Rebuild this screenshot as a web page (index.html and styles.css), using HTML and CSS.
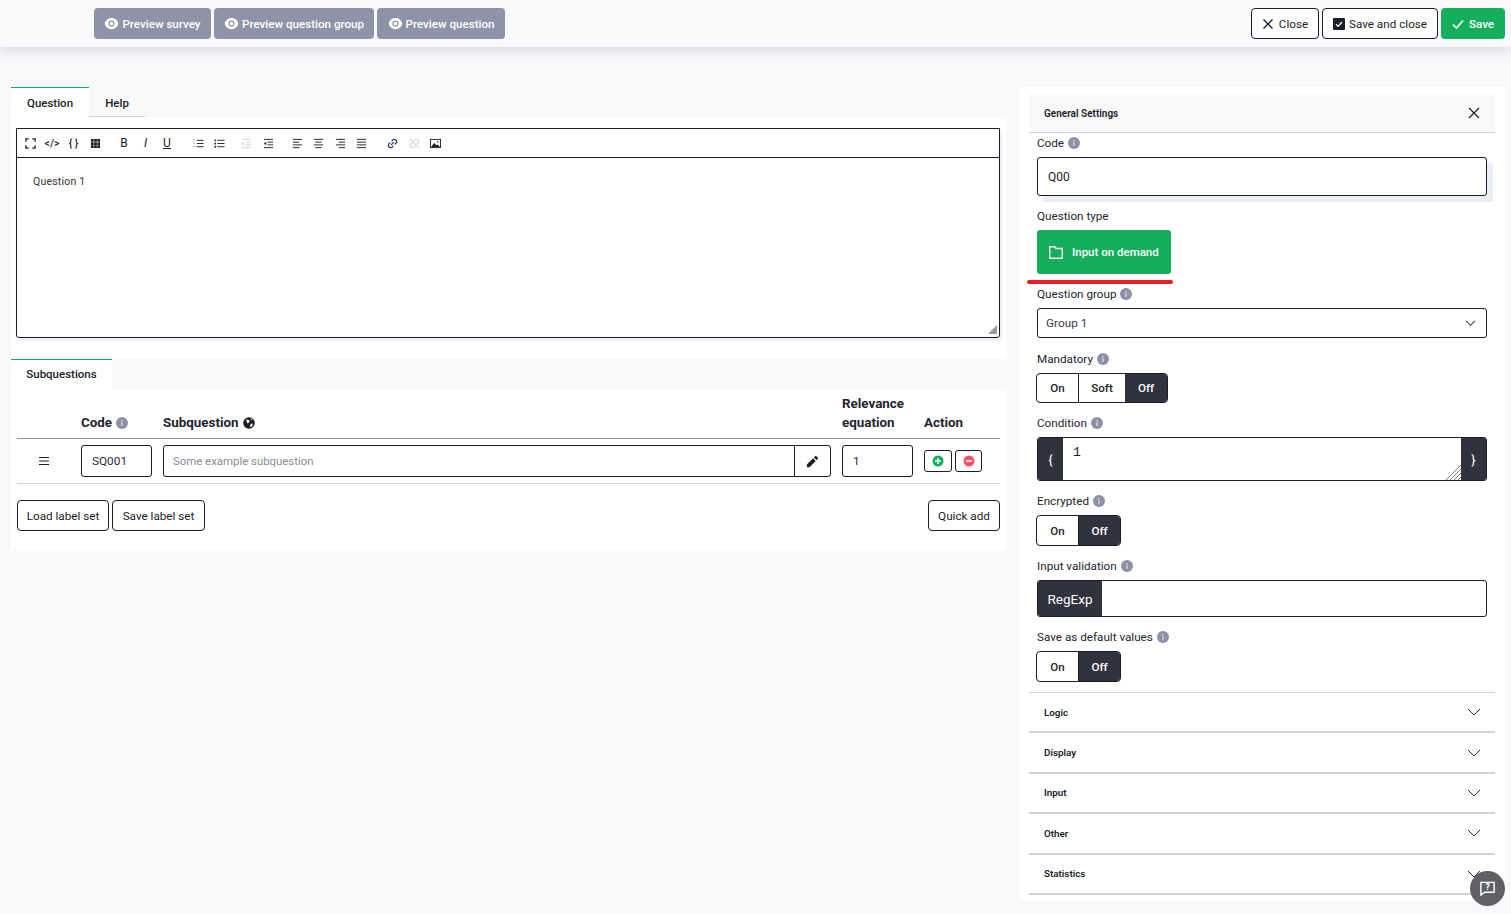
FILE: index.html
```html
<!DOCTYPE html>
<html lang="en">
<head>
  <meta charset="UTF-8" />
  <meta name="viewport" content="width=device-width, initial-scale=1" />
  <title>Question editor</title>
  <link rel="stylesheet" href="styles.css">
</head>
<body>
  <svg class="defs" aria-hidden="true">
    <symbol id="eye" viewBox="0 0 24 24"><path fill="currentColor" d="M1.181 12C2.121 6.88 6.608 3 12 3c5.392 0 9.878 3.88 10.819 9-.94 5.12-5.427 9-10.819 9-5.392 0-9.878-3.88-10.819-9zM12 17a5 5 0 1 0 0-10 5 5 0 0 0 0 10zm0-2a3 3 0 1 1 0-6 3 3 0 0 1 0 6z"/></symbol>
    <symbol id="info" viewBox="0 0 12 12"><circle cx="6" cy="6" r="6" fill="#8e92a8"/><rect x="5.300" y="5.200" width="1.400" height="3.600" fill="#d6d8e2"/><rect x="5.300" y="3" width="1.400" height="1.400" fill="#d6d8e2"/></symbol>
    <symbol id="chev" viewBox="0 0 14 8"><path fill="none" stroke="#2a2c38" d="M1 1l6 6 6-6"/></symbol>
  </svg>

  <!-- Top bar -->
  <header class="topbar">
    <div class="btn-group">
      <a class="btn btn-muted"><svg class="ico-eye"><use href="#eye"/></svg>Preview survey</a>
      <a class="btn btn-muted"><svg class="ico-eye"><use href="#eye"/></svg>Preview question group</a>
      <a class="btn btn-muted"><svg class="ico-eye"><use href="#eye"/></svg>Preview question</a>
    </div>
    <div class="btn-group">
      <a class="btn btn-outline btn-close"><svg class="ico-sm" viewBox="0 0 12 12"><path fill="none" stroke="#1b1d27" stroke-width="1.300" d="M1.500 1.500l9 9M10.500 1.500l-9 9"/></svg>Close</a>
      <a class="btn btn-outline btn-saveclose"><svg class="ico-sm" viewBox="0 0 12 12"><rect width="12" height="12" rx="1" fill="#1b1d27"/><path fill="none" stroke="#fff" stroke-width="1.300" d="M3 6.200l2.200 2.200L9 4"/></svg>Save and close</a>
      <a class="btn btn-green"><svg class="ico-sm" viewBox="0 0 12 12"><path fill="none" stroke="#fff" stroke-width="1.600" d="M1 6.500l3.500 3.500L11 2.500"/></svg>Save</a>
    </div>
  </header>

  <main class="page">
    <!-- Left column -->
    <section class="left">
      <div class="tabs">
        <div class="tab active tab-first">Question</div>
        <div class="tab tab-plain">Help</div>
      </div>
      <div class="panel editor-panel">
        <div class="editor">
          <div class="toolbar">
            <span class="tool-set">
              <svg class="tool" viewBox="0 0 12 12"><path fill="none" stroke="#1b1d27" stroke-width="1.400" d="M1 4V1h3M8 1h3v3M11 8v3H8M4 11H1V8"/></svg>
              <span class="tool tool-text">&lt;/&gt;</span>
              <span class="tool tool-text">{ }</span>
              <svg class="tool" viewBox="0 0 12 12"><path fill="#1b1d27" d="M1 1h3v3H1zM4.500 1h3v3h-3zM8 1h3v3H8zM1 4.500h3v3H1zM4.500 4.500h3v3h-3zM8 4.500h3v3H8zM1 8h3v3H1zM4.500 8h3v3h-3zM8 8h3v3H8z"/></svg>
            </span>
            <span class="tool-set">
              <span class="tool tool-letter">B</span>
              <i class="tool tool-letter">I</i>
              <u class="tool tool-letter">U</u>
            </span>
            <span class="tool-set set-lists">
              <svg class="tool" viewBox="0 0 12 12"><path stroke="#1b1d27" d="M4 2.500h7.500M4 6h7.500M4 9.500h7.500"/><path stroke="#1b1d27" stroke-dasharray="1 1" d="M1 1.500v2M1 5v2M1 8.500v2"/></svg>
              <svg class="tool" viewBox="0 0 12 12"><path stroke="#1b1d27" d="M3.500 2.500h8M3.500 6h8M3.500 9.500h8"/><path fill="#1b1d27" d="M.5 1.500h1.500v2H.5zM.5 5h1.500v2H.5zM.5 8.500h1.500v2H.5z"/></svg>
            </span>
            <span class="tool-set set-indent">
              <svg class="tool tool-off" viewBox="0 0 12 12"><path stroke="#1b1d27" d="M1 1.500h10M5 4.500h6M5 7.500h6M1 10.500h10"/><path fill="#1b1d27" d="M1 4l2.500 2L1 8z"/></svg>
              <svg class="tool" viewBox="0 0 12 12"><path stroke="#1b1d27" d="M1 1.500h10M5 4.500h6M5 7.500h6M1 10.500h10"/><path fill="#1b1d27" d="M3.500 4L1 6l2.500 2z"/></svg>
            </span>
            <span class="tool-set">
              <svg class="tool" viewBox="0 0 12 12"><path stroke="#1b1d27" d="M1 1.500h10M1 4.500h7M1 7.500h10M1 10.500h7"/></svg>
              <svg class="tool" viewBox="0 0 12 12"><path stroke="#1b1d27" d="M1 1.500h10M2.500 4.500h7M1 7.500h10M2.500 10.500h7"/></svg>
              <svg class="tool" viewBox="0 0 12 12"><path stroke="#1b1d27" d="M1 1.500h10M4 4.500h7M1 7.500h10M4 10.500h7"/></svg>
              <svg class="tool" viewBox="0 0 12 12"><path stroke="#1b1d27" d="M1 1.500h10M1 4.500h10M1 7.500h10M1 10.500h10"/></svg>
            </span>
            <span class="tool-set set-media">
              <svg class="tool" viewBox="0 0 12 12"><g fill="none" stroke="#1b3a6b" stroke-width="1.300"><path d="M5 3.500l1.500-1.500a2.500 2.500 0 0 1 3.500 3.500L8.500 7"/><path d="M7 8.500L5.500 10A2.500 2.500 0 0 1 2 6.500L3.500 5"/><path d="M4.500 7.500l3-3"/></g></svg>
              <svg class="tool tool-off" viewBox="0 0 12 12"><g fill="none" stroke="#1b3a6b" stroke-width="1.300"><path d="M5 3.500l1.500-1.500a2.500 2.500 0 0 1 3.500 3.500L8.500 7"/><path d="M7 8.500L5.500 10A2.500 2.500 0 0 1 2 6.500L3.500 5"/><path d="M1 1l10 10"/></g></svg>
              <svg class="tool" viewBox="0 0 12 12"><rect x=".5" y="1.500" width="11" height="9" fill="#fff" stroke="#2b2118"/><path fill="#2b2118" d="M1 10l3.500-4.500L7 8l1.500-1L11 10z"/><circle cx="8.500" cy="4" r="1" fill="#3b7dd8"/></svg>
            </span>
          </div>
          <div class="editor-body">Question 1</div>
          <span class="resize-corner"></span>
        </div>
      </div>

      <div class="tabs">
        <div class="tab active tab-sub">Subquestions</div>
      </div>
      <div class="panel sub-panel">
        <div class="sq-row sq-head">
          <div></div>
          <div class="sq-th">Code <svg class="ico-info"><use href="#info"/></svg></div>
          <div class="sq-th">Subquestion
            <svg class="ico-info" viewBox="0 0 12 12"><circle cx="6" cy="6" r="5.800" fill="#1b1d27"/><path fill="#fff" d="M3 2.500l3 .5 .5 2-2 1.500zM7.500 7l2.500-.5-1 3-2 .5zM7.500 1.500l2 1-1 1z"/></svg>
          </div>
          <div class="sq-th sq-th-wrap">Relevance<br>equation</div>
          <div class="sq-th">Action</div>
        </div>
        <div class="sq-row sq-body">
          <div class="drag"><svg viewBox="0 0 12 10"><path stroke="#1b1d27" d="M1 1.500h10M1 5h10M1 8.500h10"/></svg></div>
          <div class="sq-input">SQ001</div>
          <div class="sq-input sq-text">
            <span class="placeholder">Some example subquestion</span>
            <span class="pencil"><svg viewBox="0 0 24 24"><path fill="#1b1d27" d="M12.900 6.858l4.242 4.243L7.242 21H3v-4.243l9.900-9.900zm1.414-1.414l2.121-2.122a1 1 0 0 1 1.414 0l2.829 2.829a1 1 0 0 1 0 1.414l-2.122 2.121-4.242-4.242z"/></svg></span>
          </div>
          <div class="sq-input">1</div>
          <div class="actions">
            <a class="act-btn"><svg viewBox="0 0 12 12"><circle cx="6" cy="6" r="5.500" fill="#14ae5c"/><path stroke="#fff" stroke-width="1.500" d="M3 6h6M6 3v6"/></svg></a>
            <a class="act-btn act-minus"><svg viewBox="0 0 12 12"><circle cx="6" cy="6" r="5.500" fill="#ff515f"/><path stroke="#fff" stroke-width="1.500" d="M3 6h6"/></svg></a>
          </div>
        </div>
        <div class="sq-foot">
          <div class="btn-group">
            <a class="btn btn-outline btn-load">Load label set</a>
            <a class="btn btn-outline btn-savelabel">Save label set</a>
          </div>
          <a class="btn btn-outline btn-quick">Quick add</a>
        </div>
      </div>
    </section>

    <!-- Right column -->
    <aside class="settings">
      <div class="settings-head">General Settings
        <svg class="ico-x" viewBox="0 0 12 12"><path fill="none" stroke="#1b1d27" stroke-width="1.200" d="M1 1l10 10M11 1L1 11"/></svg>
      </div>
      <div class="form">
        <div class="field field-first">
          <label>Code <svg class="ico-info"><use href="#info"/></svg></label>
          <div class="input input-code">Q00</div>
        </div>
        <div class="field">
          <label>Question type</label>
          <a class="type-btn"><svg viewBox="0 0 14 13"><path fill="none" stroke="#fff" stroke-width="1.400" d="M.7 .7h5l1.400 1.800h6.200v9.800H.7z"/></svg>Input on demand</a>
          <div class="red-mark"></div>
        </div>
        <div class="field field-tight">
          <label>Question group <svg class="ico-info"><use href="#info"/></svg></label>
          <div class="input select">Group 1 <svg class="ico-chev-sm"><use href="#chev"/></svg></div>
        </div>
        <div class="field field-mandatory">
          <label>Mandatory <svg class="ico-info"><use href="#info"/></svg></label>
          <div class="toggle toggle-three"><span class="t-on">On</span><span class="t-soft">Soft</span><span class="t-off">Off</span></div>
        </div>
        <div class="field">
          <label>Condition <svg class="ico-info"><use href="#info"/></svg></label>
          <div class="condition">
            <span class="brace">{</span>
            <div class="cond-text">1
              <svg class="hatch" viewBox="0 0 15 15"><path stroke="#777" d="M0 15L15 0M4 15L15 4M8 15l7-7M12 15l3-3"/></svg>
            </div>
            <span class="brace">}</span>
          </div>
        </div>
        <div class="field">
          <label>Encrypted <svg class="ico-info"><use href="#info"/></svg></label>
          <div class="toggle"><span class="t-on">On</span><span class="t-off">Off</span></div>
        </div>
        <div class="field">
          <label>Input validation <svg class="ico-info"><use href="#info"/></svg></label>
          <div class="regexp"><span class="regexp-tag">RegExp</span></div>
        </div>
        <div class="field">
          <label>Save as default values <svg class="ico-info"><use href="#info"/></svg></label>
          <div class="toggle"><span class="t-on">On</span><span class="t-off">Off</span></div>
        </div>
      </div>
      <div class="accordion">
        <div class="acc-row">Logic <svg class="ico-chev"><use href="#chev"/></svg></div>
        <div class="acc-row">Display <svg class="ico-chev"><use href="#chev"/></svg></div>
        <div class="acc-row">Input <svg class="ico-chev"><use href="#chev"/></svg></div>
        <div class="acc-row">Other <svg class="ico-chev"><use href="#chev"/></svg></div>
        <div class="acc-row">Statistics <svg class="ico-chev"><use href="#chev"/></svg></div>
      </div>
    </aside>
  </main>

  <a class="help-bubble"><svg viewBox="0 0 18 18"><path fill="none" stroke="#fff" stroke-width="1.500" d="M2 2.500h14v10.500H6l-4 3z"/><text x="9" y="11" font-size="9" font-weight="700" text-anchor="middle" fill="#fff">?</text></svg></a>
</body>
</html>
```

FILE: styles.css
```css
* {
  box-sizing: border-box; margin: 0; padding: 0;
}
body {
  font-family: 'Roboto', 'Liberation Sans', sans-serif;
  font-size: 12px;
  background: #f8f9fb;
  color: #1b1d27;
  overflow: hidden;
}
.defs {
  width: 0;
  height: 0;
  position: absolute;
}

/* top bar */
.topbar {
  height: 47px;
  display: flex;
  justify-content: space-between;
  align-items: center;
  padding: 0 6px 0 94px;
  background: #f8f9fb;
  box-shadow: 0 3px 14px rgba(30,32,45,0.16);
  position: relative;
}
.btn-group {
  display: flex;
  gap: 3px;
}
.btn {
  height: 31px;
  display: flex;
  align-items: center;
  justify-content: center;
  border-radius: 4px;
  font-size: 11.600px;
  font-weight: 500;
  white-space: nowrap;
}
.btn-muted {
  background: #8f93a8;
  color: #fff;
}
.btn-muted:nth-child(1) { width: 117px; }
.btn-muted:nth-child(2) { width: 160px; }
.btn-muted:nth-child(3) { width: 128px; }
.ico-eye {
  width: 15px;
  height: 15px;
  margin-right: 3px;
}
.btn-outline {
  background: #fff;
  border: 1px solid #1b1d27;
  font-weight: 400;
  font-size: 11.700px;
}
.btn-close { width: 68px; }
.btn-saveclose { width: 116px; }
.btn-saveclose .ico-sm { margin-right: 4px; }
.btn-green {
  width: 64px;
  background: #14ae5c;
  color: #fff;
}
.btn-load { width: 92px; }
.btn-savelabel { width: 93px; }
.btn-quick { width: 72px; }
.ico-sm {
  width: 12px;
  height: 12px;
  margin-right: 5px;
}

/* page layout */
.page {
  display: flex;
  gap: 13px;
  padding: 40px 6px 0 11px;
}
.left {
  width: 996px;
  flex: none;
}
.tabs {
  display: flex;
  height: 30px;
}
.tab {
  width: 78px;
  display: flex;
  align-items: center;
  justify-content: center;
  font-weight: 500;
  font-size: 11.500px;
}
.tab.active {
  background: #fff;
  border-top: 1px solid #14ae5c;
}
.tab-first { padding-top: 1px; }
.tab-plain {
  width: 56px;
  border-bottom: 1px solid #d5d5da;
  padding-top: 2px;
}
.tab-sub {
  width: 101px;
  padding-bottom: 1px;
}
.panel {
  background: #fff;
}
.editor-panel {
  padding: 11px 7px 21px 5px;
}

/* editor */
.editor {
  height: 210px;
  border: 1px solid #1b1d27;
  border-radius: 0 0 3px 3px;
  box-shadow: 2px 3px 0 #eef0f8;
  position: relative;
}
.toolbar {
  height: 29px;
  border-bottom: 1px solid #1b1d27;
  display: flex;
  align-items: center;
  padding-left: 8px;
  gap: 18px;
}
.tool-set {
  display: flex;
  align-items: center;
  gap: 10.500px;
}
.set-lists { margin-left: 2px; }
.set-indent { margin-left: -2px; }
.set-media { margin-left: 2px; }
.tool {
  width: 11px;
  height: 11px;
  display: block;
  text-align: center;
}
.tool-off { opacity: 0.2; }
.tool-text {
  font-size: 10.500px;
  line-height: 11px;
  font-weight: 500;
  white-space: nowrap;
  display: flex;
  justify-content: center;
}
.tool-letter {
  font-size: 12px;
  line-height: 11px;
  font-weight: 400;
}
.editor-body {
  padding: 17px 16px;
  font-size: 10.500px;
  line-height: 14px;
  letter-spacing: 0.2px;
  color: #333;
}
.resize-corner {
  position: absolute;
  right: 2px;
  bottom: 3px;
  width: 9px;
  height: 9px;
  background: #9a9a9a;
  clip-path: polygon(100% 0, 100% 100%, 0 100%);
}

/* subquestions */
.sub-panel {
  padding: 0 7px 19px 6px;
}
.sq-row {
  display: grid;
  grid-template-columns: 53px 71px 668px 71px 1fr;
  column-gap: 11px;
}
.sq-head {
  height: 50px;
  border-bottom: 1px solid #8e92a8;
  align-items: end;
  padding-bottom: 6px;
}
.sq-th {
  font-size: 13.400px;
  font-weight: 700;
  line-height: 19px;
  color: #23252f;
  display: flex;
  align-items: center;
  gap: 4px;
}
.sq-th-wrap { display: block; }
.ico-info {
  width: 12px;
  height: 12px;
  vertical-align: -2px;
}
.sq-body {
  height: 45px;
  border-bottom: 1px solid #d5d5da;
  padding-top: 6px;
}
.drag {
  display: flex;
  justify-content: center;
  padding: 11px 0 0 0;
}
.drag svg {
  width: 12px;
  height: 10px;
}
.sq-input {
  height: 32px;
  border: 1px solid #1b1d27;
  border-radius: 3px;
  display: flex;
  align-items: center;
  padding-left: 10px;
  font-size: 11.800px;
  color: #2a2c38;
}
.sq-text {
  justify-content: space-between;
  padding-left: 9px;
}
.placeholder {
  color: #8a8c96;
  font-size: 11.400px;
}
.pencil {
  width: 36px;
  height: 100%;
  border-left: 1px solid #1b1d27;
  display: flex;
  align-items: center;
  justify-content: center;
}
.pencil svg {
  width: 15px;
  height: 15px;
}
.actions {
  display: flex;
  gap: 3px;
  padding-top: 5px;
}
.act-btn {
  width: 28px;
  height: 22px;
  border: 1px solid #1b1d27;
  border-radius: 3px;
  display: flex;
  align-items: center;
  justify-content: center;
}
.act-minus { width: 27px; }
.act-btn svg {
  width: 12px;
  height: 12px;
}
.sq-foot {
  display: flex;
  justify-content: space-between;
  padding-top: 16px;
}

/* settings column */
.settings {
  width: 485px;
  flex: none;
  height: 814px;
  background: #fff;
  padding: 7px 10px 0 9px;
}
.settings-head {
  height: 39px;
  background: #f8f9fb;
  border-bottom: 1px solid #d5d5e0;
  display: flex;
  justify-content: space-between;
  align-items: center;
  padding: 0 15px;
  font-size: 10px;
  font-weight: 600;
}
.ico-x {
  width: 12px;
  height: 12px;
}
.form {
  padding: 0 8px;
}
.field {
  padding-top: 11px;
}
.field-first { padding-top: 1px; }
.field-tight { padding-top: 0; }
.field-mandatory { padding-top: 12px; }
.field label {
  display: block;
  height: 18px;
  line-height: 19px;
  margin-bottom: 5px;
  font-size: 11.700px;
  color: #23252f;
}
.field label .ico-info {
  margin-left: 1px;
}
.input {
  border: 1px solid #1b1d27;
  border-radius: 3px;
  display: flex;
  align-items: center;
}
.input-code {
  height: 39px;
  padding-left: 10px;
  box-shadow: 6px 6px 0 #eceef7;
}
.type-btn {
  width: 134px;
  height: 44px;
  background: #14ae5c;
  border-radius: 3px;
  color: #fff;
  font-weight: 500;
  font-size: 11.500px;
  display: flex;
  align-items: center;
  padding-left: 12px;
}
.type-btn svg {
  width: 14px;
  height: 13px;
  margin-right: 9px;
}
.red-mark {
  width: 146px;
  height: 4px;
  margin: 6px 0 1px -10px;
  background: #ee1c25;
  border-radius: 2px;
}
.select {
  height: 30px;
  padding: 0 10px 0 8px;
  justify-content: space-between;
  color: #3a3c48;
  font-size: 11.800px;
}
.ico-chev-sm {
  width: 11px;
  height: 6px;
  stroke-width: 1.400px;
}
.toggle {
  display: inline-flex;
  height: 31px;
  margin-left: -1px;
  border: 1px solid #1b1d27;
  border-radius: 4px;
  overflow: hidden;
  font-weight: 500;
  font-size: 11.600px;
  vertical-align: top;
}
.toggle-three { height: 30px; }
.toggle span {
  display: flex;
  align-items: center;
  justify-content: center;
}
.t-on {
  width: 42px;
  border-right: 1px solid #1b1d27;
}
.t-soft { width: 46px; }
.t-off {
  width: 41px;
  background: #30323e;
  color: #fff;
}
.toggle-three .t-off { width: 42px; }
.condition {
  height: 44px;
  display: flex;
  border: 1px solid #1b1d27;
  border-radius: 3px;
  overflow: hidden;
}
.brace {
  width: 25px;
  background: #30323e;
  color: #fff;
  display: flex;
  align-items: center;
  justify-content: center;
  font-size: 13px;
}
.cond-text {
  flex: 1;
  padding: 7px 10px;
  font-family: 'Liberation Mono', monospace;
  font-size: 13px;
  line-height: 16px;
  position: relative;
}
.hatch {
  position: absolute;
  right: 0;
  bottom: 0;
  width: 15px;
  height: 15px;
}
.regexp {
  height: 37px;
  border: 1px solid #1b1d27;
  border-radius: 3px;
  overflow: hidden;
  display: flex;
}
.regexp-tag {
  width: 64px;
  background: #30323e;
  color: #fff;
  font-size: 13.500px;
  display: flex;
  align-items: center;
  justify-content: center;
}

/* accordion rows */
.accordion {
  margin-top: 10px;
  border-top: 1px solid #d5d5da;
}
.acc-row {
  height: 40.400px;
  border-bottom: 2px solid #d2d2da;
  display: flex;
  justify-content: space-between;
  align-items: center;
  padding: 0 14px 0 15px;
  font-size: 9.800px;
  font-weight: 600;
}
.ico-chev {
  width: 14px;
  height: 8px;
  stroke-width: 1px;
}
.help-bubble {
  position: fixed;
  left: 1470px;
  top: 871px;
  width: 35px;
  height: 35px;
  border-radius: 50%;
  background: #5f6165;
  display: flex;
  align-items: center;
  justify-content: center;
}
.help-bubble svg {
  width: 17px;
  height: 17px;
  font-family: 'Roboto', sans-serif;
}
```
